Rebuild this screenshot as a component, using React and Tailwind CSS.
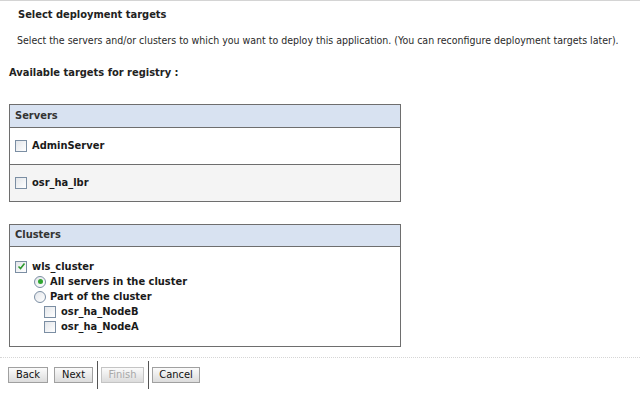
import React from 'react';

const Checkbox = ({ checked }) => (
    <span className="inline-flex w-[12px] h-[12px] shrink-0 items-center justify-center border border-[#7b8ea3] bg-gradient-to-br from-[#e3e6ea] to-white">
        {checked && (
            <svg width="9" height="9" viewBox="0 0 9 9">
                <path d="M1.5 4.5 L3.5 6.5 L7.5 1.5" fill="none" stroke="#2e9a2e" strokeWidth="1.6" />
            </svg>
        )}
    </span>
);

const Radio = ({ checked }) => (
    <span className="inline-flex w-[12px] h-[12px] shrink-0 items-center justify-center rounded-full border border-[#7b8ea3] bg-gradient-to-br from-[#e3e6ea] to-white">
        {checked && <span className="w-[5px] h-[5px] rounded-full bg-[#2fa52f]" />}
    </span>
);

const Button = ({ label, disabled }) => (
    <div
        className={`h-[16px] flex items-center justify-center border border-[#a0a0a0] bg-gradient-to-b from-[#fbfbfb] to-[#dcdcdc] text-[11px] ${
            disabled ? 'text-[#a8a8a8] border-[#c4c4c4]' : 'text-[#111]'
        }`}
    >
        {label}
    </div>
);

export default function App() {
    return (
        <div
            className="w-[640px] h-[398px] bg-white overflow-hidden text-[#1a1a1a] text-[11px]"
            style={{ fontFamily: '"DejaVu Sans Condensed", "Liberation Sans", sans-serif' }}
        >
            <div className="border-t border-[#d4d4d4]" />
            <div className="pl-[18px] pt-[6px] font-bold text-[11px] leading-[16px] text-[#222]">Select deployment targets</div>
            <div className="pl-[17px] pt-[9px] leading-[16px] text-[10.5px] whitespace-nowrap text-[#2a2a2a]">
                Select the servers and/or clusters to which you want to deploy this application. (You can reconfigure deployment targets later).
            </div>
            <div className="pl-[9px] pt-[17px] font-bold leading-[16px] text-[#222]">Available targets for registry :</div>

            <div className="ml-[9px] mt-[23px] w-[392px] border border-[#6e6e6e]">
                <div className="h-[23px] bg-[#d8e2f1] border-b border-[#6e6e6e] flex items-center pl-[5px] font-bold text-[#333]">Servers</div>
                <div className="h-[37px] flex items-center gap-[5px] pl-[5px] border-b border-[#6e6e6e] bg-white font-bold">
                    <Checkbox />
                    <span>AdminServer</span>
                </div>
                <div className="h-[36px] flex items-center gap-[5px] pl-[5px] bg-[#f4f4f4] font-bold">
                    <Checkbox />
                    <span>osr_ha_lbr</span>
                </div>
            </div>

            <div className="ml-[9px] mt-[22px] w-[392px] h-[123px] border border-[#6e6e6e]">
                <div className="h-[22px] bg-[#d8e2f1] border-b border-[#6e6e6e] flex items-center pl-[5px] font-bold text-[#333]">Clusters</div>
                <div className="pt-[12px] pl-[5px] font-bold leading-[15px]">
                    <div className="flex items-center gap-[5px]">
                        <Checkbox checked />
                        <span>wls_cluster</span>
                    </div>
                    <div className="flex items-center gap-[4px] pl-[19px]">
                        <Radio checked />
                        <span>All servers in the cluster</span>
                    </div>
                    <div className="flex items-center gap-[4px] pl-[19px]">
                        <Radio />
                        <span>Part of the cluster</span>
                    </div>
                    <div className="flex items-center gap-[5px] pl-[29px]">
                        <Checkbox />
                        <span>osr_ha_NodeB</span>
                    </div>
                    <div className="flex items-center gap-[5px] pl-[29px]">
                        <Checkbox />
                        <span>osr_ha_NodeA</span>
                    </div>
                </div>
            </div>

            <div className="mt-[10px] border-t border-dotted border-[#d6d6d6]" />

            <div className="flex items-center pl-[8px] pt-[3px]">
                <div className="w-[40px]"><Button label="Back" /></div>
                <div className="w-[39px] ml-[6px]"><Button label="Next" /></div>
                <div className="w-px h-[28px] bg-[#555] ml-[4px]" />
                <div className="w-[43px] ml-[3px]"><Button label="Finish" disabled /></div>
                <div className="w-px h-[28px] bg-[#555] ml-[4px]" />
                <div className="w-[48px] ml-[3px]"><Button label="Cancel" /></div>
            </div>
        </div>
    );
}
